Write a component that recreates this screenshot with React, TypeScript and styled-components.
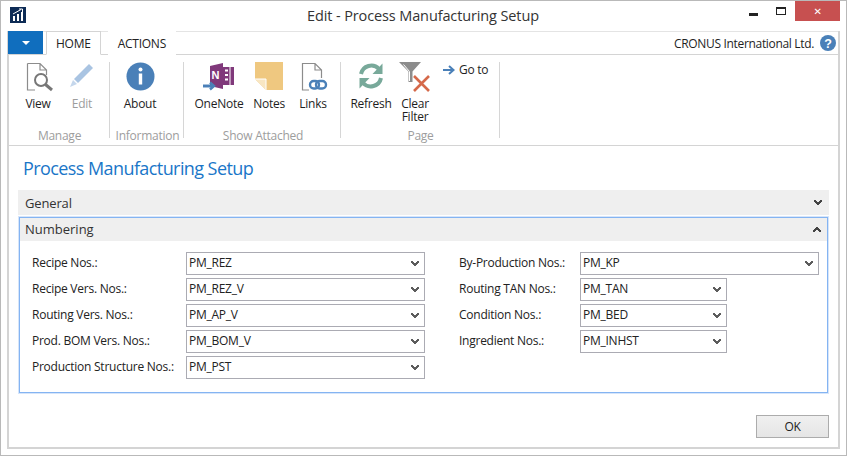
import styled, { createGlobalStyle } from 'styled-components'

const GlobalStyle = createGlobalStyle`
  html, body {
    margin: 0;
    padding: 0;
    background: #fff;
  }
  * {
    box-sizing: border-box;
  }
`

interface FieldData {
  label: string
  value: string
  width: number
}

const leftFields: FieldData[] = [
  { label: 'Recipe Nos.:', value: 'PM_REZ', width: 239 },
  { label: 'Recipe Vers. Nos.:', value: 'PM_REZ_V', width: 239 },
  { label: 'Routing Vers. Nos.:', value: 'PM_AP_V', width: 239 },
  { label: 'Prod. BOM Vers. Nos.:', value: 'PM_BOM_V', width: 239 },
  { label: 'Production Structure Nos.:', value: 'PM_PST', width: 239 },
]

const rightFields: FieldData[] = [
  { label: 'By-Production Nos.:', value: 'PM_KP', width: 239 },
  { label: 'Routing TAN Nos.:', value: 'PM_TAN', width: 147 },
  { label: 'Condition Nos.:', value: 'PM_BED', width: 147 },
  { label: 'Ingredient Nos.:', value: 'PM_INHST', width: 147 },
]

const Chevron = ({ up, color }: { up?: boolean; color: string }) => (
  <svg width="8" height="6" viewBox="0 0 8 6" shapeRendering="crispEdges">
    <path
      d={
        up
          ? 'M3 0 H5 V1 H6 V2 H7 V3 H8 V5 H6 V4 H5 V3 H3 V4 H2 V5 H0 V3 H1 V2 H2 V1 H3 Z'
          : 'M0 0 H2 V1 H3 V2 H5 V1 H6 V0 H8 V2 H7 V3 H6 V4 H5 V5 H3 V4 H2 V3 H1 V2 H0 Z'
      }
      fill={color}
    />
  </svg>
)

const ViewIcon = () => (
  <svg width="30" height="30" viewBox="-3 0 30 30">
    <path d="M1.5 1.5 H14 L20.5 8 V13 M14 1.5 V8 H20.5 M9 28 H1.5 V1.5" fill="none" stroke="#8c8c8c" strokeWidth="1.2" />
    <circle cx="15" cy="18" r="6" fill="#fff" stroke="#777" strokeWidth="2" />
    <path d="M19.5 22.5 L26 28" stroke="#777" strokeWidth="3" />
  </svg>
)

const EditIcon = () => (
  <svg width="26" height="26" viewBox="0 0 26 26">
    <path d="M20 2 L24 6 L9 21 L5 17 Z" fill="#a9c4e2" />
    <path d="M4 18 L8 22 L1 25 Z" fill="#c5d7ec" />
  </svg>
)

const AboutIcon = () => (
  <svg width="29" height="29" viewBox="0 0 29 29">
    <circle cx="14.5" cy="14.5" r="14" fill="#4a80b8" />
    <circle cx="14.5" cy="7.5" r="2" fill="#fff" />
    <rect x="12.8" y="11.5" width="3.4" height="11" fill="#fff" />
  </svg>
)

const OneNoteIcon = () => (
  <svg width="32" height="32" viewBox="0 0 32 32">
    <path d="M7 4 L20 1 V27 L7 24 Z" fill="#80397b" />
    <rect x="20" y="5" width="11" height="18" fill="#80397b" />
    <path d="M22 8.5 H25 M22 13 H25 M22 17.5 H25" stroke="#fff" strokeWidth="2" />
    <path d="M27 5 V23" stroke="#fff" strokeWidth="1" />
    <text x="8.5" y="17" fontFamily="Liberation Sans, sans-serif" fontSize="11" fontWeight="700" fill="#fff">N</text>
    <path d="M0 24 H10 M7 20.5 L11 24 L7 27.5" fill="none" stroke="#4a80b8" strokeWidth="2.4" />
    <path d="M0 24 H10" stroke="#4a80b8" strokeWidth="2.6" />
  </svg>
)

const NotesIcon = () => (
  <svg width="28" height="28" viewBox="0 0 28 28">
    <path d="M0 0 H28 V28 H11 L0 17 Z" fill="#efc880" />
    <path d="M0 17 H11 V28" fill="#f8e6c2" stroke="#fff" strokeWidth="1" />
  </svg>
)

const LinksIcon = () => (
  <svg width="30" height="30" viewBox="-3 0 30 30">
    <path d="M8 28 H1.5 V1.5 H14 L20.5 8 V16 M14 1.5 V8 H20.5" fill="none" stroke="#8c8c8c" strokeWidth="1.2" />
    <rect x="9" y="19" width="9" height="7.5" rx="3.7" fill="#fff" stroke="#4a80b8" strokeWidth="2.4" />
    <rect x="15" y="19" width="10" height="7.5" rx="3.7" fill="none" stroke="#4a80b8" strokeWidth="2.4" />
  </svg>
)

const RefreshIcon = () => (
  <svg width="28" height="28" viewBox="0 0 28 28">
    <path d="M4 12 A10.5 10.5 0 0 1 22 7" fill="none" stroke="#78a99a" strokeWidth="4" />
    <path d="M25.5 1.5 V12 H15.5 Z" fill="#78a99a" />
    <path d="M24 16 A10.5 10.5 0 0 1 6 21" fill="none" stroke="#78a99a" strokeWidth="4" />
    <path d="M2.5 26.5 V16 H12.5 Z" fill="#78a99a" />
  </svg>
)

const ClearFilterIcon = () => (
  <svg width="32" height="31" viewBox="0 0 32 31">
    <path d="M0 0 H22 L13.5 9.5 V20 H9.5 V9.5 Z" fill="#8c8c8c" />
    <path d="M4.5 2.5 L10.5 9.5 V19" fill="none" stroke="#fff" strokeWidth="1" />
    <path d="M15 14 L30 29 M30 14 L15 29" stroke="#d5694a" strokeWidth="2.6" />
  </svg>
)

const GoToIcon = () => (
  <svg width="12" height="10" viewBox="0 0 12 10">
    <path d="M0 5 H9.5 M6 1 L10.5 5 L6 9" fill="none" stroke="#4a80b8" strokeWidth="2" />
  </svg>
)

const AppIcon = () => (
  <svg width="16" height="16" viewBox="0 0 16 16">
    <rect width="16" height="16" fill="#0d2b55" />
    <path d="M3 9 H5 V14 H3 Z M7 7 H9 V14 H7 Z M11 5 H13 V14 H11 Z" fill="#fff" />
    <path d="M3 7 L11 2.5 M9 2 H12.5 V5" fill="none" stroke="#fff" strokeWidth="1" />
  </svg>
)

const HelpIcon = () => (
  <svg width="16" height="16" viewBox="0 0 16 16">
    <circle cx="8" cy="8" r="8" fill="#4a80b8" />
    <text x="8" y="12.5" textAnchor="middle" fontFamily="Liberation Sans, sans-serif" fontSize="12.5" fontWeight="700" fill="#fff">?</text>
  </svg>
)

const Field = ({ label, value, width, labelWidth }: FieldData & { labelWidth: number }) => (
  <FieldRow>
    <FieldLabel $width={labelWidth}>{label}</FieldLabel>
    <SelectBox $width={width}>
      <span>{value}</span>
      <Chevron color="#5c5c5c" />
    </SelectBox>
  </FieldRow>
)

export default function App() {
  return (
    <>
      <GlobalStyle />
      <Window>
        <TitleBar>
          <AppIconSlot>
            <AppIcon />
          </AppIconSlot>
          <WindowTitle>Edit - Process Manufacturing Setup</WindowTitle>
          <WindowControls>
            <MinimizeGlyph />
            <RestoreGlyph />
            <CloseButton>✕</CloseButton>
          </WindowControls>
        </TitleBar>
        <Frame>
          <TabBar>
            <AppMenuButton>
              <MenuCaret />
            </AppMenuButton>
            <Tab $active>HOME</Tab>
            <Tab>ACTIONS</Tab>
            <Company>CRONUS International Ltd.</Company>
            <HelpIcon />
          </TabBar>
          <Ribbon>
            <RibbonGroup $width={101} $pad={7}>
              <GroupActions>
                <RibbonButton $width={44}>
                  <IconSlot><ViewIcon /></IconSlot>
                  View
                </RibbonButton>
                <RibbonButton $width={44} $disabled>
                  <IconSlot><EditIcon /></IconSlot>
                  Edit
                </RibbonButton>
              </GroupActions>
              <GroupLabel>Manage</GroupLabel>
            </RibbonGroup>
            <RibbonGroup $width={74} $pad={8}>
              <GroupActions>
                <RibbonButton $width={44}>
                  <IconSlot><AboutIcon /></IconSlot>
                  About
                </RibbonButton>
              </GroupActions>
              <GroupLabel>Information</GroupLabel>
            </RibbonGroup>
            <RibbonGroup $width={157} $pad={8}>
              <GroupActions>
                <RibbonButton $width={54}>
                  <IconSlot><OneNoteIcon /></IconSlot>
                  OneNote
                </RibbonButton>
                <RibbonButton $width={46}>
                  <IconSlot><NotesIcon /></IconSlot>
                  Notes
                </RibbonButton>
                <RibbonButton $width={42}>
                  <IconSlot><LinksIcon /></IconSlot>
                  Links
                </RibbonButton>
              </GroupActions>
              <GroupLabel>Show Attached</GroupLabel>
            </RibbonGroup>
            <RibbonGroup $width={159} $pad={7}>
              <GroupActions>
                <RibbonButton $width={46}>
                  <IconSlot><RefreshIcon /></IconSlot>
                  Refresh
                </RibbonButton>
                <RibbonButton $width={42}>
                  <IconSlot><ClearFilterIcon /></IconSlot>
                  Clear Filter
                </RibbonButton>
                <SmallAction>
                  <GoToIcon />
                  Go to
                </SmallAction>
              </GroupActions>
              <GroupLabel>Page</GroupLabel>
            </RibbonGroup>
          </Ribbon>
          <Content>
            <PageTitle>Process Manufacturing Setup</PageTitle>
            <CollapsedHeader>
              General
              <Chevron color="#444" />
            </CollapsedHeader>
            <Section>
              <SectionHeader>
                <span>Numbering</span>
                <Chevron up color="#444" />
              </SectionHeader>
              <FieldGrid>
                <FieldColumn>
                  {leftFields.map((f) => (
                    <Field key={f.label} {...f} labelWidth={154} />
                  ))}
                </FieldColumn>
                <FieldColumn>
                  {rightFields.map((f) => (
                    <Field key={f.label} {...f} labelWidth={121} />
                  ))}
                </FieldColumn>
              </FieldGrid>
            </Section>
            <Footer>
              <OkButton>OK</OkButton>
            </Footer>
          </Content>
        </Frame>
      </Window>
    </>
  )
}

const Window = styled.div`
  width: 847px;
  height: 456px;
  display: flex;
  flex-direction: column;
  padding: 0 6px 6px 6px;
  background: #fff;
  border: 1px solid #b9b9b9;
  font-family: 'Open Sans', 'Liberation Sans', sans-serif;
  font-size: 12px;
  letter-spacing: -0.25px;
  color: #1e1e1e;
  overflow: hidden;
`

const TitleBar = styled.div`
  position: relative;
  height: 30px;
  flex: none;
  display: flex;
  align-items: center;
  justify-content: center;
  margin-right: -6px;
`

const AppIconSlot = styled.div`
  position: absolute;
  left: 3px;
  top: 6px;
  height: 16px;
`

const WindowTitle = styled.div`
  font-size: 14.5px;
  letter-spacing: -0.12px;
  color: #333;
  margin-top: -1px;
  margin-right: 7px;
`

const WindowControls = styled.div`
  position: absolute;
  right: 6px;
  top: 0;
  display: flex;
  align-items: center;
`

const MinimizeGlyph = styled.div`
  width: 9px;
  height: 3px;
  margin-top: 6px;
  background: #222;
  margin-right: 18px;
`

const RestoreGlyph = styled.div`
  width: 10px;
  height: 8px;
  border: 1px solid #222;
  border-top-width: 2px;
  margin-right: 9px;
`

const CloseButton = styled.div`
  width: 45px;
  height: 20px;
  background: #c75050;
  color: #fff;
  font-family: 'DejaVu Sans', sans-serif;
  font-size: 10px;
  font-weight: 700;
  display: flex;
  align-items: center;
  justify-content: center;
`

const Frame = styled.div`
  flex: 1;
  display: flex;
  flex-direction: column;
  border: 2px solid #d4d4d4;
  border-top: 0;
  min-height: 0;
`

const TabBar = styled.div`
  height: 24px;
  flex: none;
  display: flex;
  align-items: flex-end;
  margin-left: -1px;
  padding-right: 2px;
  border-bottom: 1px solid #d4d4d4;
  border-top: 1px solid #e4e4e4;

  & > svg {
    align-self: center;
    margin-left: 6px;
  }
`

const AppMenuButton = styled.div`
  width: 35px;
  height: 23px;
  background: #106ebe;
  display: flex;
  align-items: center;
  justify-content: center;
  margin-right: 3px;
`

const MenuCaret = styled.div`
  width: 0;
  height: 0;
  border-left: 4px solid transparent;
  border-right: 4px solid transparent;
  border-top: 4px solid #fff;
`

const Tab = styled.div<{ $active?: boolean }>`
  height: 24px;
  margin-bottom: -1px;
  padding: 0 9px;
  display: flex;
  align-items: center;
  justify-content: center;
  font-size: 12px;
  background: #fff;
  color: #222;
  border: 1px solid ${(p) => (p.$active ? '#d4d4d4' : 'transparent')};
  border-bottom-color: ${(p) => (p.$active ? '#fff' : 'transparent')};
  margin-right: ${(p) => (p.$active ? '7px' : '0')};
`

const Company = styled.div`
  margin-left: auto;
  align-self: center;
  font-size: 12px;
  letter-spacing: -0.33px;
`

const Ribbon = styled.div`
  height: 91px;
  flex: none;
  display: flex;
  padding: 7px 0 7px 0;
  border-bottom: 1px solid #d4d4d4;
`

const RibbonGroup = styled.div<{ $width: number; $pad: number }>`
  width: ${(p) => p.$width}px;
  padding-left: ${(p) => p.$pad}px;
  display: flex;
  flex-direction: column;
  justify-content: space-between;
  border-right: 1px solid #d6d6d6;
  flex: none;
`

const GroupActions = styled.div`
  display: flex;
  align-items: flex-start;
`

const RibbonButton = styled.div<{ $width: number; $disabled?: boolean }>`
  width: ${(p) => p.$width}px;
  display: flex;
  flex-direction: column;
  align-items: center;
  text-align: center;
  line-height: 13px;
  color: ${(p) => (p.$disabled ? '#9d9d9d' : '#1e1e1e')};
`

const IconSlot = styled.div`
  height: 35px;
  display: flex;
  align-items: flex-start;
  justify-content: center;
`

const SmallAction = styled.div`
  display: flex;
  align-items: center;
  gap: 4px;
  margin-left: 7px;
  margin-top: 1px;
  line-height: 14px;
`

const GroupLabel = styled.div`
  color: #9d9d9d;
  text-align: center;
  margin-left: -6px;
  line-height: 14px;
  margin-bottom: -5px;
`

const Content = styled.div`
  flex: 1;
  display: flex;
  flex-direction: column;
  padding: 0 9px;
  min-height: 0;
`

const PageTitle = styled.h1`
  margin: 0;
  height: 44px;
  padding: 10px 0 0 5px;
  font-size: 18px;
  line-height: 24px;
  font-weight: 400;
  letter-spacing: -0.58px;
  color: #1a76c8;
`

const CollapsedHeader = styled.div`
  height: 25px;
  flex: none;
  display: flex;
  align-items: center;
  justify-content: space-between;
  padding: 0 7px 0 7px;
  background: #efefef;
  font-size: 13px;
  letter-spacing: -0.15px;
  color: #333;
`

const Section = styled.div`
  margin: 2px 1px 0;
  height: 176px;
  flex: none;
  border: 1px solid #84b4f2;
  box-shadow: 0 0 0 1px #d6e5fa;
`

const SectionHeader = styled.div`
  height: 23px;
  display: flex;
  align-items: center;
  justify-content: space-between;
  padding: 0 6px 0 5px;
  background: #efefef;
  font-size: 13px;
  letter-spacing: 0;
  color: #333;

  & > span {
    margin-top: -2px;
  }
`

const FieldGrid = styled.div`
  display: flex;
  padding: 11px 0 0 12px;
  gap: 34px;
`

const FieldColumn = styled.div`
  display: flex;
  flex-direction: column;
  gap: 3px;
  width: 393px;
`

const FieldRow = styled.div`
  display: flex;
  align-items: center;
  height: 23px;
`

const FieldLabel = styled.div<{ $width: number }>`
  width: ${(p) => p.$width}px;
  flex: none;
  color: #222;
  white-space: nowrap;
  padding-bottom: 2px;
`

const SelectBox = styled.div<{ $width: number }>`
  flex: none;
  width: ${(p) => p.$width}px;
  height: 23px;
  display: flex;
  align-items: center;
  justify-content: space-between;
  padding: 0 5px 0 2px;
  background: #fff;
  border: 1px solid #ababb3;
  color: #222;

  & > span {
    margin-top: -2px;
  }
`

const Footer = styled.div`
  display: flex;
  justify-content: flex-end;
  padding-top: 22px;
`

const OkButton = styled.div`
  width: 73px;
  height: 23px;
  display: flex;
  align-items: center;
  justify-content: center;
  background: linear-gradient(#f0f0f0, #e5e5e5);
  border: 1px solid #acacac;
  color: #222;
`
